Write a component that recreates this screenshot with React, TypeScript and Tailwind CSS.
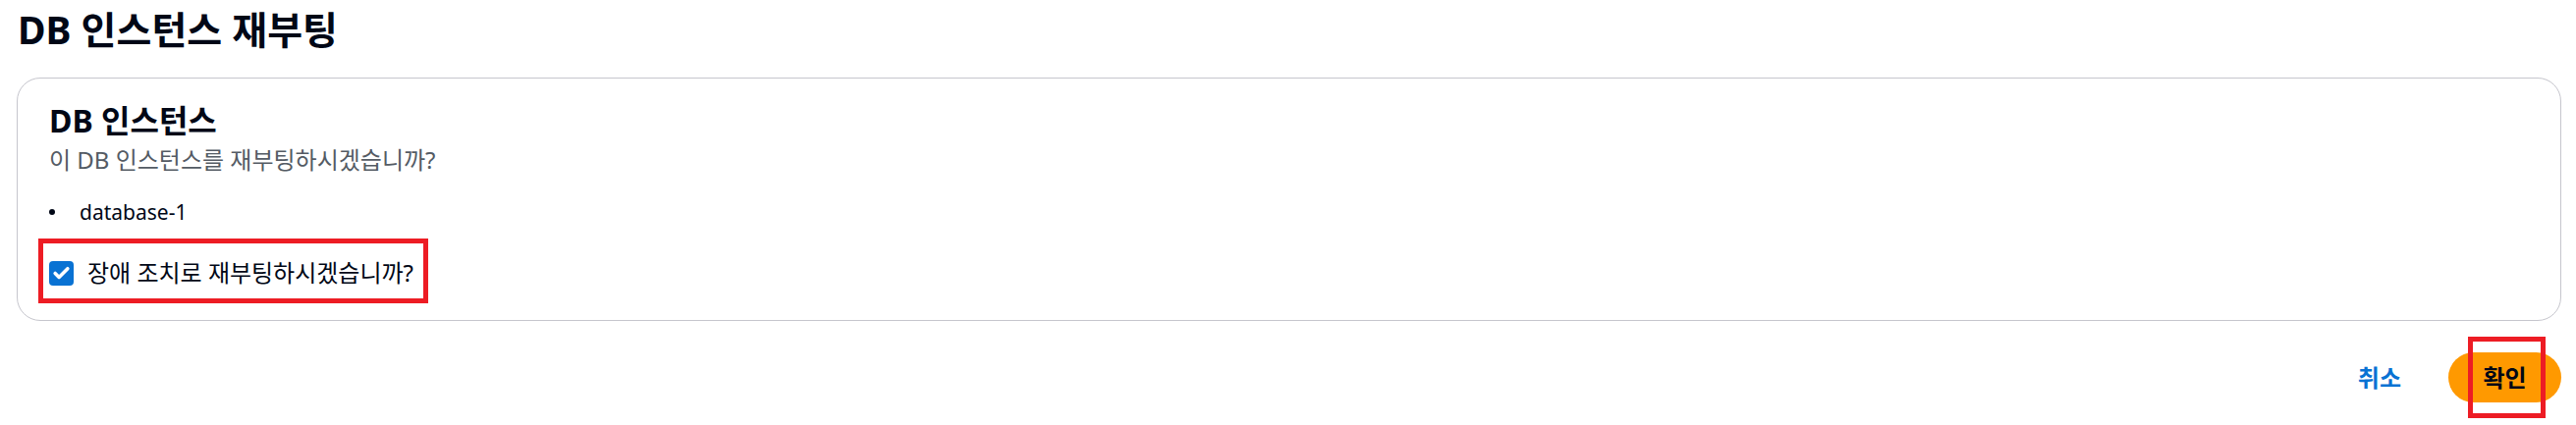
import { Check } from 'lucide-react';

const font = { fontFamily: '"Noto Sans", "Noto Sans CJK KR", sans-serif' };

export default function App() {
  return (
    <div className="w-[2623px] h-[433px] bg-white pl-[17px] pr-[15px] text-[#000716] overflow-hidden" style={font}>
      <h1 className="mt-[6px] pl-[1px] text-[39px] leading-[48px] font-bold">DB 인스턴스 재부팅</h1>

      <div className="mt-[25px] border border-[#c6c6cd] rounded-[24px] px-[32px] pt-[23px] pb-[33px]">
        <h2 className="text-[32px] leading-[40px] font-bold">DB 인스턴스</h2>
        <p className="mt-[4px] text-[24px] leading-[32px] text-[#545b64]">이 DB 인스턴스를 재부팅하시겠습니까?</p>

        <ul className="mt-[22px]">
          <li className="flex items-center gap-[25px] text-[21px] leading-[30px]">
            <span className="w-[6px] h-[6px] rounded-full bg-[#000716]" />
            database-1
          </li>
        </ul>

        <div className="relative mt-[32px] flex items-center gap-[14px] h-[30px]">
          <span className="w-[25px] h-[25px] rounded-[4px] bg-[#0972d3] flex items-center justify-center">
            <Check className="w-[19px] h-[19px] text-white" strokeWidth={4.5} />
          </span>
          <span className="text-[24px] leading-[30px]">장애 조치로 재부팅하시겠습니까?</span>
          <div className="absolute left-[-11px] top-[-20px] w-[397px] h-[66px] border-[5px] border-[#ed1c24]" />
        </div>
      </div>

      <div className="mt-[32px] flex justify-end items-center">
        <button className="mr-[48px] text-[24px] leading-[32px] font-bold text-[#0972d3]">취소</button>
        <div className="relative">
          <button className="w-[115px] h-[51px] rounded-full bg-[#ff9900] text-[24px] font-bold text-[#000716]">확인</button>
          <div className="absolute left-[20px] top-[-16px] w-[79px] h-[83px] border-[5px] border-[#ed1c24]" />
        </div>
      </div>
    </div>
  );
}
